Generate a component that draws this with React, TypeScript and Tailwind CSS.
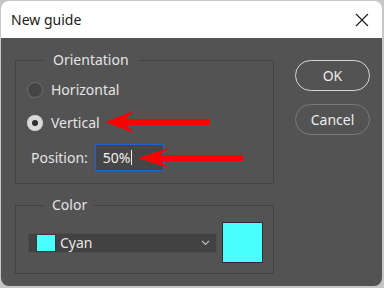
import React from 'react';

const font = { fontFamily: '"Noto Sans", "Open Sans", Arial, sans-serif' };

function Radio({ checked, label }: { checked?: boolean; label: string }) {
  return (
    <div className="flex h-5 items-center gap-[8px]">
      {checked ? (
        <span className="flex h-[16px] w-[16px] items-center justify-center rounded-full bg-[#d9d9d9]">
          <span className="h-[6px] w-[6px] rounded-full bg-[#2e2e2e]" />
        </span>
      ) : (
        <span className="h-[16px] w-[16px] rounded-full border border-[#6e6e6e] bg-[#454545]" />
      )}
      <span className="text-[14px] leading-5 text-[#e4e4e4]">{label}</span>
    </div>
  );
}

export default function App() {
  return (
    <div className="h-[288px] w-[384px] bg-[#c6c6c6] p-px" style={font}>
      <div className="relative flex h-[285px] w-[381px] flex-col overflow-hidden rounded-[8px]">
        {/* title bar */}
        <div className="flex h-[37px] items-center justify-between bg-white pl-[10px] pr-[13px]">
          <span className="text-[14px] text-[#1a1a1a]">New guide</span>
          <svg width="14" height="14" viewBox="0 0 14 14" className="text-[#1a1a1a]">
            <path d="M1 1 L13 13 M13 1 L1 13" stroke="currentColor" strokeWidth="1.1" />
          </svg>
        </div>

        {/* body */}
        <div className="flex flex-1 bg-[#535353] pl-[14px] pt-[12px]">
          <div className="flex w-[259px] flex-col">
            <fieldset className="h-[134px] border border-[#434343] px-[11px] pb-[11px]">
              <legend className="ml-[17px] px-[9px] text-[14px] leading-5 text-[#e4e4e4]">Orientation</legend>
              <div className="mt-[10px] flex flex-col">
                <Radio label="Horizontal" />
                <div className="mt-[13px]">
                  <Radio checked label="Vertical" />
                </div>
                <div className="mt-[11px] flex items-center gap-[7px] pl-[4px]">
                  <span className="text-[14px] text-[#e4e4e4]">Position:</span>
                  <div className="flex h-[27px] w-[69px] items-center border border-[#1d64d0] bg-[#464646] pl-[7px]">
                    <span className="text-[14px] text-[#f0f0f0]">50%</span>
                    <span className="ml-px h-[15px] w-px bg-[#f0f0f0]" />
                  </div>
                </div>
              </div>
            </fieldset>

            <fieldset className="mt-[11px] h-[79px] border border-[#434343] pl-[12px]">
              <legend className="ml-[17px] px-[7px] text-[14px] leading-5 text-[#e4e4e4]">Color</legend>
              <div className="mt-[7px] flex items-center gap-[5px]">
                <div className="flex h-[20px] w-[189px] items-center rounded-[2px] border border-[#4d4d4d] bg-[#424242] pl-[7px] pr-[6px]">
                  <span className="h-[18px] w-[20px] border border-[#3a3a3a] bg-[#4cffff]" />
                  <span className="ml-[4px] flex-1 text-[14px] leading-5 text-[#e8e8e8]">Cyan</span>
                  <svg width="9" height="6" viewBox="0 0 9 6">
                    <path d="M1 1 L4.5 4.5 L8 1" stroke="#bdbdbd" strokeWidth="1.1" fill="none" />
                  </svg>
                </div>
                <div className="h-[41px] w-[41px] border border-[#2e2e2e] bg-[#4cffff]" />
              </div>
            </fieldset>
          </div>

          <div className="ml-[21px] mt-[10px] flex flex-col gap-[13px]">
            <button className="h-[31px] w-[75px] rounded-full border border-[#d6d6d6] text-[14px] text-[#ececec]">OK</button>
            <button className="h-[31px] w-[75px] rounded-full border border-[#7a7a7a] text-[14px] text-[#ececec]">Cancel</button>
          </div>
        </div>

        {/* annotation arrows */}
        <svg className="pointer-events-none absolute left-[-1px] top-[-1px]" width="384" height="288" viewBox="0 0 384 288">
          <polygon points="105,122 134,111 126,119 210,119 210,125 126,125 134,133" fill="#ff0000" />
          <polygon points="138,158 169,148 160,155 243,155 243,161 160,161 169,168" fill="#ff0000" />
        </svg>
      </div>
    </div>
  );
}
